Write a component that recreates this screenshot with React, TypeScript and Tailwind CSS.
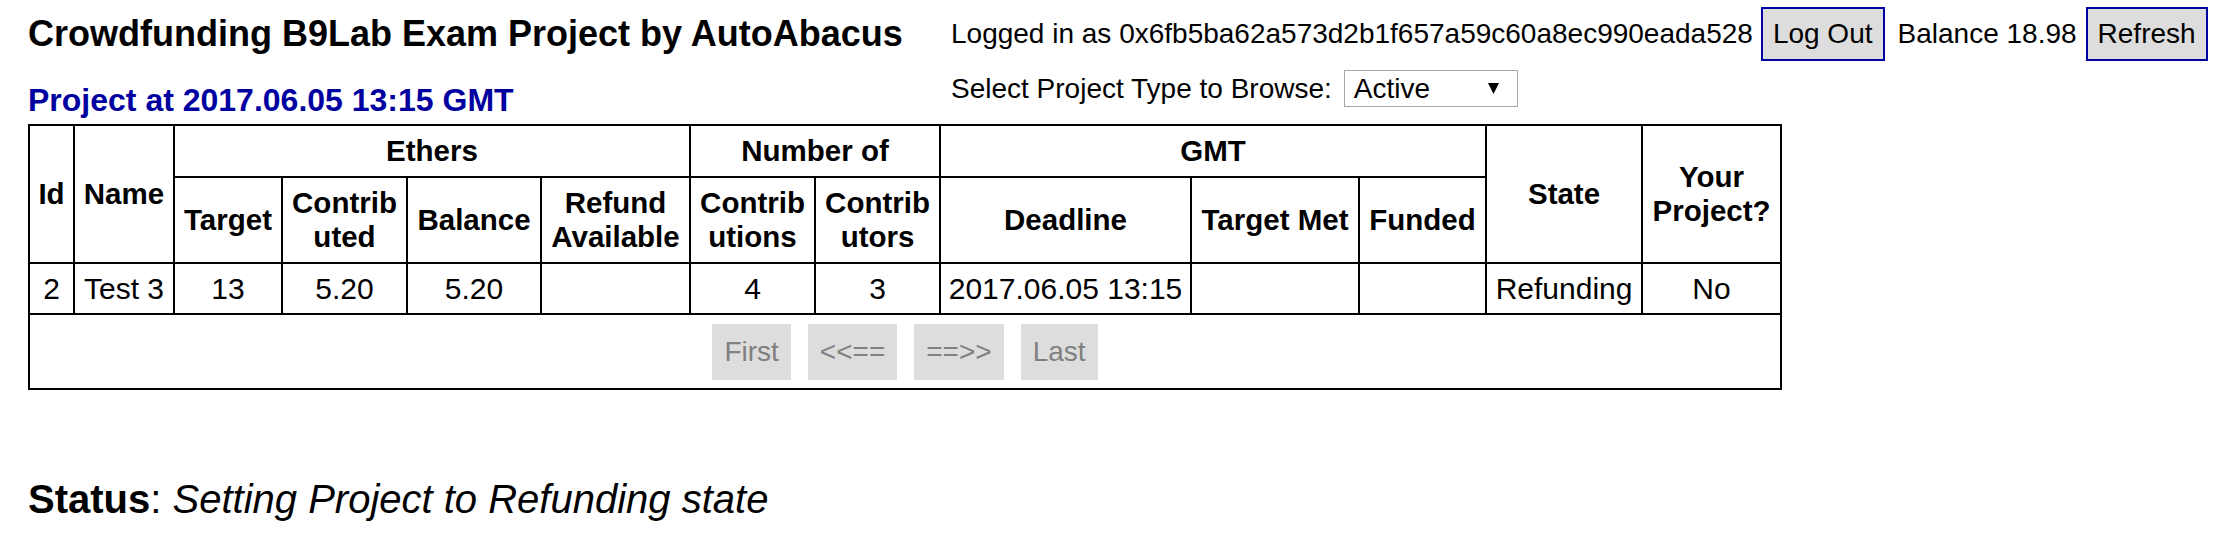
import React from "react";

const cols = [45, 100, 108, 125, 134, 149, 125, 125, 251, 168, 127, 156, 139];

function Th({ children, rowSpan, colSpan }: { children: React.ReactNode; rowSpan?: number; colSpan?: number }) {
  return (
    <th
      rowSpan={rowSpan}
      colSpan={colSpan}
      className="border-2 border-black px-[2px] text-center align-middle text-[29.5px] font-bold leading-[34px]"
    >
      {children}
    </th>
  );
}

function Td({ children }: { children?: React.ReactNode }) {
  return (
    <td className="border-2 border-black px-[2px] text-center align-middle text-[30px] leading-[34px]">{children}</td>
  );
}

function PagerButton({ label }: { label: string }) {
  return (
    <button className="h-[56px] border-2 border-[#dddddd] bg-[#dddddd] px-[10px] text-[28px] leading-[32px] text-[#808080]">
      {label}
    </button>
  );
}

export default function App() {
  return (
    <div
      className="min-h-[544px] bg-white px-[28px] text-black"
      style={{ fontFamily: '"Liberation Sans", Arial, sans-serif' }}
    >
      <div className="flex items-start">
        <div className="w-[923px] shrink-0 pt-[16px]">
          <h1 className="text-[36px] font-bold leading-[36px]">Crowdfunding B9Lab Exam Project by AutoAbacus</h1>
          <h2 className="mt-[32px] text-[32px] font-bold leading-[32px] text-[#0000a0]">
            Project at 2017.06.05 13:15 GMT
          </h2>
        </div>
        <div className="pt-[7px] text-[28px] leading-[32px]">
          <div className="flex h-[54px] items-center whitespace-nowrap">
            <span>Logged in as 0x6fb5ba62a573d2b1f657a59c60a8ec990eada528</span>
            <button className="ml-[8px] h-[54px] border-2 border-[#0000a0] bg-[#dddddd] px-[10px] text-[28px] leading-[32px]">
              Log Out
            </button>
            <span className="ml-[13px]">Balance 18.98</span>
            <button className="ml-[9px] h-[54px] border-2 border-[#0000a0] bg-[#dddddd] px-[10px] text-[28px] leading-[32px]">
              Refresh
            </button>
          </div>
          <div className="mt-[9px] flex items-center whitespace-nowrap">
            <span>Select Project Type to Browse:</span>
            <div className="ml-[12px] flex h-[37px] w-[174px] items-center justify-between border border-[#a6a6a6] bg-white pl-[9px] pr-[18px]">
              <span>Active</span>
              <svg width="11" height="13" viewBox="0 0 11 13">
                <polygon points="0,1 11,1 5.5,12" fill="#000" />
              </svg>
            </div>
          </div>
        </div>
      </div>

      <table className="mt-[8px] table-fixed border-collapse" style={{ width: 1754 }}>
        <colgroup>
          {cols.map((w, i) => (
            <col key={i} style={{ width: w }} />
          ))}
        </colgroup>
        <thead>
          <tr className="h-[52px]">
            <Th rowSpan={2}>Id</Th>
            <Th rowSpan={2}>Name</Th>
            <Th colSpan={4}>Ethers</Th>
            <Th colSpan={2}>Number of</Th>
            <Th colSpan={3}>GMT</Th>
            <Th rowSpan={2}>State</Th>
            <Th rowSpan={2}>
              Your
              <br />
              Project?
            </Th>
          </tr>
          <tr className="h-[86px]">
            <Th>Target</Th>
            <Th>
              Contrib
              <br />
              uted
            </Th>
            <Th>Balance</Th>
            <Th>
              Refund
              <br />
              Available
            </Th>
            <Th>
              Contrib
              <br />
              utions
            </Th>
            <Th>
              Contrib
              <br />
              utors
            </Th>
            <Th>Deadline</Th>
            <Th>Target Met</Th>
            <Th>Funded</Th>
          </tr>
        </thead>
        <tbody>
          <tr className="h-[51px]">
            <Td>2</Td>
            <Td>Test 3</Td>
            <Td>13</Td>
            <Td>5.20</Td>
            <Td>5.20</Td>
            <Td />
            <Td>4</Td>
            <Td>3</Td>
            <Td>2017.06.05 13:15</Td>
            <Td />
            <Td />
            <Td>Refunding</Td>
            <Td>No</Td>
          </tr>
          <tr className="h-[75px]">
            <td colSpan={13} className="border-2 border-black align-middle">
              <div className="flex justify-center gap-[17px]">
                <PagerButton label="First" />
                <PagerButton label="<<==" />
                <PagerButton label="==>>" />
                <PagerButton label="Last" />
              </div>
            </td>
          </tr>
        </tbody>
      </table>

      <p className="mt-[89px] text-[40px] leading-[40px]">
        <b>Status</b>: <i>Setting Project to Refunding state</i>
      </p>
    </div>
  );
}
